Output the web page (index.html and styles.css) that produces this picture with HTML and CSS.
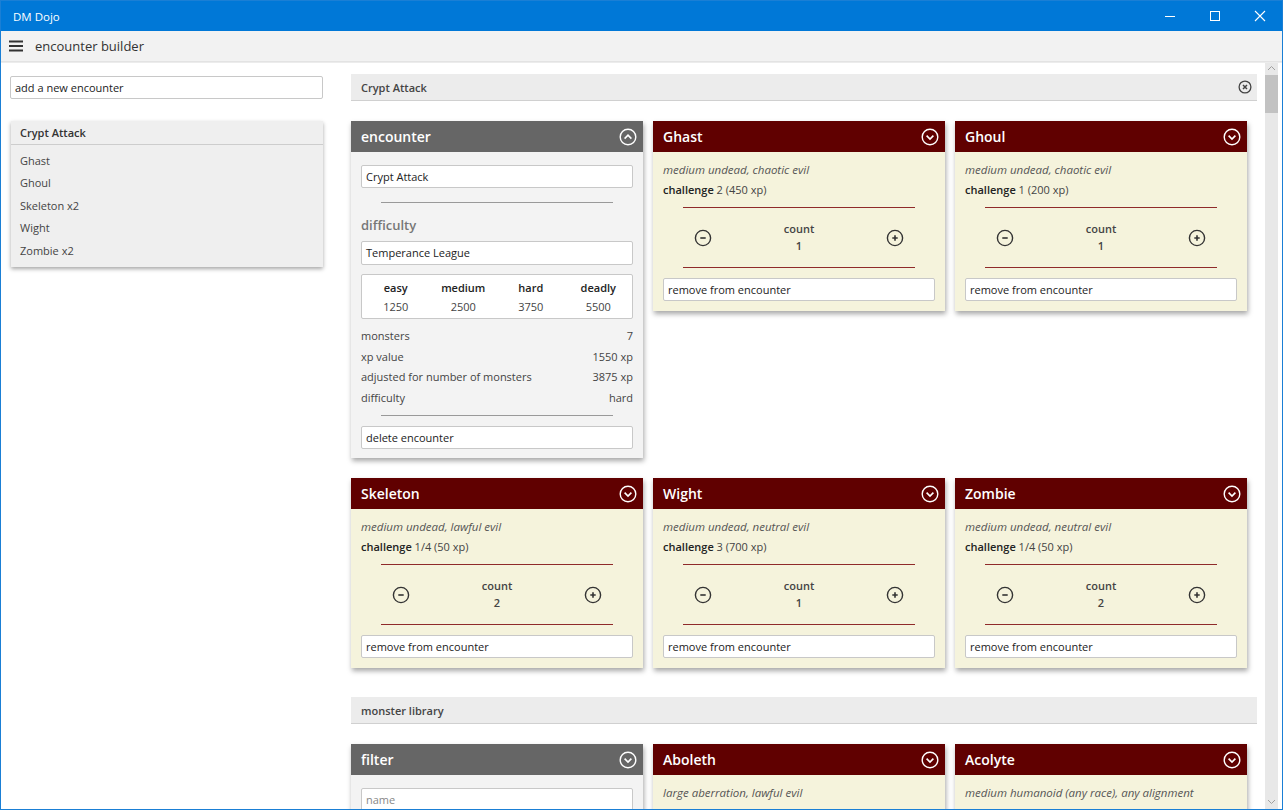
FILE: index.html
```html
<!DOCTYPE html>
<html>
<head>
<meta charset="utf-8">
<link rel="stylesheet" href="styles.css">
</head>
<body>
<div class="window">
  <div class="titlebar">
    <span class="app-name">DM Dojo</span>
    <div class="win-controls">
      <span class="wc"><svg width="12" height="12" viewBox="0 0 12 12"><line x1="1" y1="6.5" x2="11" y2="6.5" stroke="#fff" stroke-width="1"/></svg></span>
      <span class="wc"><svg width="12" height="12" viewBox="0 0 12 12"><rect x="1.5" y="1.5" width="9" height="9" fill="none" stroke="#fff" stroke-width="1"/></svg></span>
      <span class="wc"><svg width="12" height="12" viewBox="0 0 12 12"><path d="M1 1L11 11M11 1L1 11" stroke="#fff" stroke-width="1.1"/></svg></span>
    </div>
  </div>
  <div class="appbar">
    <svg class="hamburger" width="14" height="12" viewBox="0 0 14 12"><path d="M0 1.5H14M0 6H14M0 10.5H14" stroke="#333" stroke-width="1.8"/></svg>
    <span class="page-title">encounter builder</span>
  </div>
  <div class="content">
    <aside class="sidebar">
      <div class="textbox side-input">add a new encounter</div>
      <div class="enc-list">
        <div class="enc-list-head">Crypt Attack</div>
        <ul class="enc-items">
          <li>Ghast</li>
          <li>Ghoul</li>
          <li>Skeleton x2</li>
          <li>Wight</li>
          <li>Zombie x2</li>
        </ul>
      </div>
    </aside>
    <main class="main">
      <div class="main-inner">
        <div class="section-head">
          <span>Crypt Attack</span>
          <svg width="14" height="14" viewBox="0 0 14 14"><circle cx="7" cy="7" r="5.9" fill="none" stroke="#444" stroke-width="1.3"/><path d="M5 5L9 9M9 5L5 9" stroke="#444" stroke-width="1.5"/></svg>
        </div>
        <div class="grid">
          <div class="card enc-card">
            <div class="card-head gray">
              <span>encounter</span>
              <svg class="chev" width="18" height="18" viewBox="0 0 18 18"><circle cx="9" cy="9" r="7.8" fill="none" stroke="#fff" stroke-width="1.4"/><path d="M5.6 10.6L9 7.2L12.4 10.6" fill="none" stroke="#fff" stroke-width="1.6"/></svg>
            </div>
            <div class="enc-body">
              <div class="textbox">Crypt Attack</div>
              <hr class="rule gray-rule first-rule">
              <div class="diff-title">difficulty</div>
              <div class="textbox select">Temperance League</div>
              <div class="thresholds">
                <div class="th"><b>easy</b><span>1250</span></div>
                <div class="th"><b>medium</b><span>2500</span></div>
                <div class="th"><b>hard</b><span>3750</span></div>
                <div class="th"><b>deadly</b><span>5500</span></div>
              </div>
              <div class="stats">
                <div class="stat"><span>monsters</span><span>7</span></div>
                <div class="stat"><span>xp value</span><span>1550 xp</span></div>
                <div class="stat"><span>adjusted for number of monsters</span><span>3875 xp</span></div>
                <div class="stat"><span>difficulty</span><span>hard</span></div>
              </div>
              <hr class="rule gray-rule second-rule">
              <div class="textbox">delete encounter</div>
            </div>
          </div>

          <div class="card mon-card">
            <div class="card-head red"><span>Ghast</span>
              <svg class="chev" width="18" height="18" viewBox="0 0 18 18"><circle cx="9" cy="9" r="7.8" fill="none" stroke="#fff" stroke-width="1.4"/><path d="M5.6 7.6L9 11L12.4 7.6" fill="none" stroke="#fff" stroke-width="1.6"/></svg></div>
            <div class="mon-body">
              <div class="mon-type">medium undead, chaotic evil</div>
              <div class="mon-cr"><b>challenge</b> 2 (450 xp)</div>
              <hr class="rule red-rule">
              <div class="count-row">
                <svg width="18" height="18" viewBox="0 0 18 18"><circle cx="9" cy="9" r="7.6" fill="none" stroke="#333" stroke-width="1.4"/><path d="M6.3 9H11.7" stroke="#333" stroke-width="1.6"/></svg>
                <div class="count"><b>count</b><b>1</b></div>
                <svg width="18" height="18" viewBox="0 0 18 18"><circle cx="9" cy="9" r="7.6" fill="none" stroke="#333" stroke-width="1.4"/><path d="M6.3 9H11.7M9 6.3V11.7" stroke="#333" stroke-width="1.6"/></svg>
              </div>
              <hr class="rule red-rule">
              <div class="textbox">remove from encounter</div>
            </div>
          </div>

          <div class="card mon-card">
            <div class="card-head red"><span>Ghoul</span>
              <svg class="chev" width="18" height="18" viewBox="0 0 18 18"><circle cx="9" cy="9" r="7.8" fill="none" stroke="#fff" stroke-width="1.4"/><path d="M5.6 7.6L9 11L12.4 7.6" fill="none" stroke="#fff" stroke-width="1.6"/></svg></div>
            <div class="mon-body">
              <div class="mon-type">medium undead, chaotic evil</div>
              <div class="mon-cr"><b>challenge</b> 1 (200 xp)</div>
              <hr class="rule red-rule">
              <div class="count-row">
                <svg width="18" height="18" viewBox="0 0 18 18"><circle cx="9" cy="9" r="7.6" fill="none" stroke="#333" stroke-width="1.4"/><path d="M6.3 9H11.7" stroke="#333" stroke-width="1.6"/></svg>
                <div class="count"><b>count</b><b>1</b></div>
                <svg width="18" height="18" viewBox="0 0 18 18"><circle cx="9" cy="9" r="7.6" fill="none" stroke="#333" stroke-width="1.4"/><path d="M6.3 9H11.7M9 6.3V11.7" stroke="#333" stroke-width="1.6"/></svg>
              </div>
              <hr class="rule red-rule">
              <div class="textbox">remove from encounter</div>
            </div>
          </div>

          <div class="card mon-card">
            <div class="card-head red"><span>Skeleton</span>
              <svg class="chev" width="18" height="18" viewBox="0 0 18 18"><circle cx="9" cy="9" r="7.8" fill="none" stroke="#fff" stroke-width="1.4"/><path d="M5.6 7.6L9 11L12.4 7.6" fill="none" stroke="#fff" stroke-width="1.6"/></svg></div>
            <div class="mon-body">
              <div class="mon-type">medium undead, lawful evil</div>
              <div class="mon-cr"><b>challenge</b> 1/4 (50 xp)</div>
              <hr class="rule red-rule">
              <div class="count-row">
                <svg width="18" height="18" viewBox="0 0 18 18"><circle cx="9" cy="9" r="7.6" fill="none" stroke="#333" stroke-width="1.4"/><path d="M6.3 9H11.7" stroke="#333" stroke-width="1.6"/></svg>
                <div class="count"><b>count</b><b>2</b></div>
                <svg width="18" height="18" viewBox="0 0 18 18"><circle cx="9" cy="9" r="7.6" fill="none" stroke="#333" stroke-width="1.4"/><path d="M6.3 9H11.7M9 6.3V11.7" stroke="#333" stroke-width="1.6"/></svg>
              </div>
              <hr class="rule red-rule">
              <div class="textbox">remove from encounter</div>
            </div>
          </div>

          <div class="card mon-card">
            <div class="card-head red"><span>Wight</span>
              <svg class="chev" width="18" height="18" viewBox="0 0 18 18"><circle cx="9" cy="9" r="7.8" fill="none" stroke="#fff" stroke-width="1.4"/><path d="M5.6 7.6L9 11L12.4 7.6" fill="none" stroke="#fff" stroke-width="1.6"/></svg></div>
            <div class="mon-body">
              <div class="mon-type">medium undead, neutral evil</div>
              <div class="mon-cr"><b>challenge</b> 3 (700 xp)</div>
              <hr class="rule red-rule">
              <div class="count-row">
                <svg width="18" height="18" viewBox="0 0 18 18"><circle cx="9" cy="9" r="7.6" fill="none" stroke="#333" stroke-width="1.4"/><path d="M6.3 9H11.7" stroke="#333" stroke-width="1.6"/></svg>
                <div class="count"><b>count</b><b>1</b></div>
                <svg width="18" height="18" viewBox="0 0 18 18"><circle cx="9" cy="9" r="7.6" fill="none" stroke="#333" stroke-width="1.4"/><path d="M6.3 9H11.7M9 6.3V11.7" stroke="#333" stroke-width="1.6"/></svg>
              </div>
              <hr class="rule red-rule">
              <div class="textbox">remove from encounter</div>
            </div>
          </div>

          <div class="card mon-card">
            <div class="card-head red"><span>Zombie</span>
              <svg class="chev" width="18" height="18" viewBox="0 0 18 18"><circle cx="9" cy="9" r="7.8" fill="none" stroke="#fff" stroke-width="1.4"/><path d="M5.6 7.6L9 11L12.4 7.6" fill="none" stroke="#fff" stroke-width="1.6"/></svg></div>
            <div class="mon-body">
              <div class="mon-type">medium undead, neutral evil</div>
              <div class="mon-cr"><b>challenge</b> 1/4 (50 xp)</div>
              <hr class="rule red-rule">
              <div class="count-row">
                <svg width="18" height="18" viewBox="0 0 18 18"><circle cx="9" cy="9" r="7.6" fill="none" stroke="#333" stroke-width="1.4"/><path d="M6.3 9H11.7" stroke="#333" stroke-width="1.6"/></svg>
                <div class="count"><b>count</b><b>2</b></div>
                <svg width="18" height="18" viewBox="0 0 18 18"><circle cx="9" cy="9" r="7.6" fill="none" stroke="#333" stroke-width="1.4"/><path d="M6.3 9H11.7M9 6.3V11.7" stroke="#333" stroke-width="1.6"/></svg>
              </div>
              <hr class="rule red-rule">
              <div class="textbox">remove from encounter</div>
            </div>
          </div>
        </div>

        <div class="section-head library-head"><span>monster library</span></div>
        <div class="grid">
          <div class="card enc-card">
            <div class="card-head gray"><span>filter</span>
              <svg class="chev" width="18" height="18" viewBox="0 0 18 18"><circle cx="9" cy="9" r="7.8" fill="none" stroke="#fff" stroke-width="1.4"/><path d="M5.6 7.6L9 11L12.4 7.6" fill="none" stroke="#fff" stroke-width="1.6"/></svg></div>
            <div class="enc-body">
              <div class="textbox placeholder">name</div>
            </div>
          </div>
          <div class="card mon-card">
            <div class="card-head red"><span>Aboleth</span>
              <svg class="chev" width="18" height="18" viewBox="0 0 18 18"><circle cx="9" cy="9" r="7.8" fill="none" stroke="#fff" stroke-width="1.4"/><path d="M5.6 7.6L9 11L12.4 7.6" fill="none" stroke="#fff" stroke-width="1.6"/></svg></div>
            <div class="mon-body">
              <div class="mon-type">large aberration, lawful evil</div>
            </div>
          </div>
          <div class="card mon-card">
            <div class="card-head red"><span>Acolyte</span>
              <svg class="chev" width="18" height="18" viewBox="0 0 18 18"><circle cx="9" cy="9" r="7.8" fill="none" stroke="#fff" stroke-width="1.4"/><path d="M5.6 7.6L9 11L12.4 7.6" fill="none" stroke="#fff" stroke-width="1.6"/></svg></div>
            <div class="mon-body">
              <div class="mon-type">medium humanoid (any race), any alignment</div>
            </div>
          </div>
        </div>
      </div>
      <div class="scrollbar">
        <svg class="sb-arrow" width="9" height="6" viewBox="0 0 9 6"><path d="M1 5L4.5 1.5L8 5" fill="none" stroke="#a0a0a0" stroke-width="1"/></svg>
        <div class="sb-thumb"></div>
        <div class="sb-fill"></div>
        <svg class="sb-arrow" width="9" height="6" viewBox="0 0 9 6"><path d="M1 1L4.5 4.5L8 1" fill="none" stroke="#a0a0a0" stroke-width="1"/></svg>
      </div>
    </main>
  </div>
</div>
</body>
</html>
```

FILE: styles.css
```css
* { box-sizing: border-box; }
html, body { margin: 0; padding: 0; }
body {
  width: 1283px;
  height: 810px;
  overflow: hidden;
  font-family: "Open Sans", "Noto Sans", "Liberation Sans", sans-serif;
  font-size: 11px;
  color: #333;
  background: #fff;
}
.window {
  width: 1283px;
  height: 810px;
  border: 1px solid #1a7fd5;
  display: flex;
  flex-direction: column;
  overflow: hidden;
}
.titlebar {
  height: 30px;
  flex: none;
  background: #0078d7;
  color: #fff;
  display: flex;
  align-items: center;
  justify-content: space-between;
  padding-left: 12px;
}
.app-name { font-size: 11.5px; }
.win-controls { display: flex; height: 30px; }
.wc {
  width: 45px;
  display: flex;
  align-items: center;
  justify-content: center;
}
.appbar {
  height: 30px;
  flex: none;
  background: #f2f2f2;
  display: flex;
  align-items: center;
  padding-left: 8px;
  box-shadow: 0 1px 0 #e3e3e3, 0 2px 0 #ececec;
  position: relative;
  z-index: 2;
}
.hamburger { margin-right: 12px; }
.page-title { font-size: 13px; color: #333; }

.content {
  flex: 1;
  display: flex;
  min-height: 0;
}
.sidebar {
  width: 340px;
  flex: none;
  padding: 15px 17px 0 9px;
}
.textbox {
  height: 23px;
  background: #fff;
  border: 1px solid #c8c8c8;
  border-radius: 2px;
  padding: 0 4px;
  line-height: 21px;
  font-size: 11px;
  color: #222;
  white-space: nowrap;
}
.textbox.placeholder { color: #888; }
.side-input { width: 313px; }
.enc-list {
  margin-top: 22px;
  margin-left: 1px;
  width: 312px;
  background: #efefef;
  box-shadow: 0 2px 4px rgba(0,0,0,0.35);
}
.enc-list-head {
  height: 24px;
  line-height: 24px;
  font-weight: 600;
  padding-left: 9px;
  border-bottom: 1px solid #cdcdcd;
  color: #333;
}
.enc-items {
  list-style: none;
  margin: 0;
  padding: 5px 0 5px 9px;
}
.enc-items li {
  height: 22.4px;
  line-height: 22.4px;
  color: #444;
}

.main {
  flex: 1;
  display: flex;
  min-width: 0;
  overflow: hidden;
}
.main-inner {
  width: 916px;
  flex: none;
  padding: 13px 0 0 10px;
}
.section-head {
  height: 27px;
  background: #ececec;
  border-bottom: 1px solid #d0d0d0;
  display: flex;
  align-items: center;
  justify-content: space-between;
  padding: 0 5px 0 10px;
  font-weight: 600;
  color: #444;
}
.library-head { margin-top: 29px; }
.grid {
  margin-top: 20px;
  display: grid;
  grid-template-columns: repeat(3, 292px);
  column-gap: 10px;
  row-gap: 20px;
  align-items: start;
}
.card {
  box-shadow: 1px 3px 5px rgba(0,0,0,0.35);
}
.card-head {
  height: 31px;
  display: flex;
  align-items: center;
  justify-content: space-between;
  padding: 0 6px 0 10px;
  color: #fff;
  font-size: 14px;
  font-weight: 600;
}
.card-head.gray { background: #666666; }
.card-head.red { background: #600000; }
.chev { display: block; }

.enc-body {
  background: #f3f3f3;
  padding: 13px 10px 9px;
}
.rule {
  border: 0;
  height: 1px;
  margin: 0 20px;
}
.gray-rule { background: #999; }
.red-rule { background: #8f2a2a; }
.first-rule { margin-top: 14px; }
.diff-title {
  margin-top: 10px;
  height: 24px;
  line-height: 24px;
  font-size: 13px;
  font-weight: 600;
  color: #777;
}
.textbox.select { height: 24px; line-height: 22px; margin-top: 4px; }
.thresholds {
  margin-top: 9px;
  height: 45px;
  background: #fff;
  border: 1px solid #c8c8c8;
  border-radius: 2px;
  display: grid;
  grid-template-columns: repeat(4, 1fr);
  align-content: center;
  text-align: center;
}
.th { display: flex; flex-direction: column; line-height: 19px; }
.th b { color: #222; font-weight: 600; }
.th span { color: #444; }
.stats { margin-top: 7px; }
.stat {
  display: flex;
  justify-content: space-between;
  height: 20.5px;
  line-height: 20.5px;
  color: #444;
}
.second-rule { margin-top: 7px; margin-bottom: 10px; }

.mon-body {
  background: #f5f3dc;
  padding: 8px 10px 10px;
}
.mon-type {
  line-height: 20px;
  font-style: italic;
  font-size: 11.5px;
  color: #555;
}
.mon-cr { line-height: 20px; color: #444; }
.mon-cr b { color: #222; font-weight: 600; }
.mon-body .red-rule:first-of-type { margin-top: 7px; }
.count-row {
  height: 59px;
  display: flex;
  align-items: center;
  justify-content: space-between;
  padding: 0 31px 0 31px;
}
.count {
  display: flex;
  flex-direction: column;
  align-items: center;
  line-height: 17px;
  color: #444;
  padding-bottom: 1px;
}
.count b { font-weight: 600; }
.mon-body .textbox { margin-top: 10px; }

.scrollbar {
  width: 13px;
  margin-left: 8px;
  flex: none;
  background: #e8e8e8;
  display: flex;
  flex-direction: column;
  align-items: center;
}
.sb-arrow { margin: 4px 0; flex: none; }
.sb-thumb { width: 13px; height: 38px; background: #c2c2c2; flex: none; }
.sb-fill { flex: 1; }
```
